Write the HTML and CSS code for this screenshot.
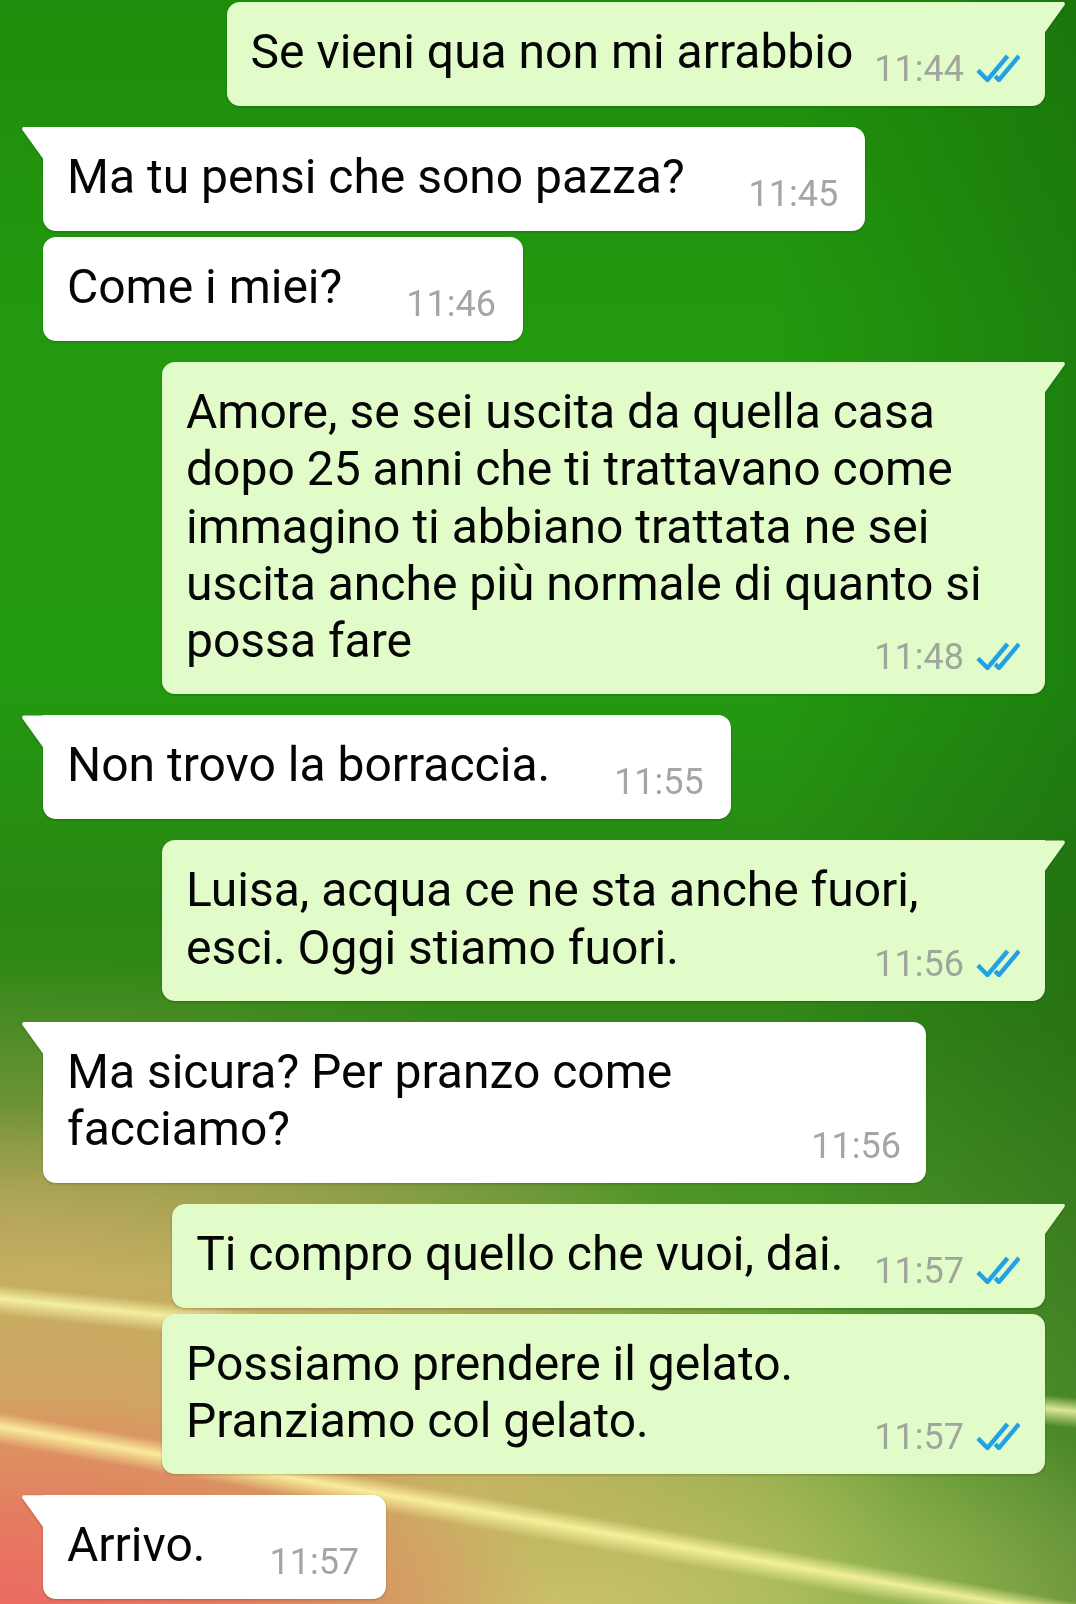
FILE: index.html
```html
<!DOCTYPE html>
<html lang="it">
<head>
<meta charset="utf-8">
<title>Chat</title>
<link rel="stylesheet" href="styles.css">
</head>
<body>
<main class="chat">

  <div class="row out">
    <div class="bubble tail">
      <p class="text">Se vieni qua non mi arrabbio</p>
      <span class="meta"><span class="time">11:44</span><svg class="ticks" viewBox="0 0 46 30"><polyline points="2,18 12,28 33,3"/><polyline points="20,24 24,28 45,3"/></svg></span>
    </div>
  </div>

  <div class="row in">
    <div class="bubble tail">
      <p class="text">Ma tu pensi che sono pazza?</p>
      <span class="meta"><span class="time">11:45</span></span>
    </div>
  </div>

  <div class="row in cont">
    <div class="bubble">
      <p class="text">Come i miei?</p>
      <span class="meta"><span class="time">11:46</span></span>
    </div>
  </div>

  <div class="row out">
    <div class="bubble tail multi">
      <p class="text">Amore, se sei uscita da quella casa<br>dopo 25 anni che ti trattavano come<br>immagino ti abbiano trattata ne sei<br>uscita anche più normale di quanto si<br>possa fare</p>
      <span class="meta"><span class="time">11:48</span><svg class="ticks" viewBox="0 0 46 30"><polyline points="2,18 12,28 33,3"/><polyline points="20,24 24,28 45,3"/></svg></span>
    </div>
  </div>

  <div class="row in">
    <div class="bubble tail">
      <p class="text">Non trovo la borraccia.</p>
      <span class="meta"><span class="time">11:55</span></span>
    </div>
  </div>

  <div class="row out">
    <div class="bubble tail multi">
      <p class="text">Luisa, acqua ce ne sta anche fuori,<br>esci. Oggi stiamo fuori.</p>
      <span class="meta"><span class="time">11:56</span><svg class="ticks" viewBox="0 0 46 30"><polyline points="2,18 12,28 33,3"/><polyline points="20,24 24,28 45,3"/></svg></span>
    </div>
  </div>

  <div class="row in">
    <div class="bubble tail multi">
      <p class="text">Ma sicura? Per pranzo come<br>facciamo?</p>
      <span class="meta"><span class="time">11:56</span></span>
    </div>
  </div>

  <div class="row out">
    <div class="bubble tail">
      <p class="text text-spaced">Ti compro quello che vuoi, dai.</p>
      <span class="meta"><span class="time">11:57</span><svg class="ticks" viewBox="0 0 46 30"><polyline points="2,18 12,28 33,3"/><polyline points="20,24 24,28 45,3"/></svg></span>
    </div>
  </div>

  <div class="row out cont">
    <div class="bubble multi">
      <p class="text">Possiamo prendere il gelato.<br>Pranziamo col gelato.</p>
      <span class="meta"><span class="time">11:57</span><svg class="ticks" viewBox="0 0 46 30"><polyline points="2,18 12,28 33,3"/><polyline points="20,24 24,28 45,3"/></svg></span>
    </div>
  </div>

  <div class="row in">
    <div class="bubble tail">
      <p class="text">Arrivo.</p>
      <span class="meta"><span class="time">11:57</span></span>
    </div>
  </div>

</main>
</body>
</html>
```

FILE: styles.css
```css
html, body {
  margin: 0;
  padding: 0;
}

body {
  width: 1076px;
  height: 1604px;
  overflow: hidden;
  font-family: Roboto, "Noto Sans", "Liberation Sans", sans-serif;
}

.chat {
  box-sizing: border-box;
  width: 1076px;
  height: 1604px;
  padding-top: 2px;
  display: flex;
  flex-direction: column;
  background-color: #24900f;
  background-image:
    linear-gradient(186deg, transparent 81.4%, rgba(255, 255, 175, 0.8) 82.2%, transparent 83.2%),
    linear-gradient(190deg, transparent 89.3%, rgba(255, 250, 165, 0.85) 90.1%, transparent 91.1%),
    radial-gradient(ellipse 540px 210px at 0% 100%, #ec6a62 0%, rgba(230, 122, 96, 0.92) 45%, rgba(220, 150, 100, 0) 100%),
    radial-gradient(ellipse 860px 340px at 6% 90%, rgba(220, 160, 100, 0.97) 0%, rgba(210, 180, 104, 0.8) 50%, rgba(200, 190, 100, 0) 100%),
    radial-gradient(ellipse 700px 240px at 52% 100%, rgba(214, 205, 118, 0.85) 0%, rgba(190, 200, 110, 0) 100%),
    radial-gradient(ellipse 760px 280px at 0% 77%, rgba(160, 152, 80, 0.95) 0%, rgba(140, 150, 70, 0.5) 55%, rgba(120, 150, 60, 0) 100%),
    linear-gradient(to right, rgba(0, 0, 0, 0) 72%, rgba(10, 50, 10, 0.24) 100%),
    linear-gradient(to bottom, #1f8d0b 0%, #23990f 20%, #229a10 42%, #2a8814 56%, #338818 64%, #479424 74%, #5aa02f 86%, #6aa838 100%);
}

.row {
  display: flex;
  margin-top: 21px;
}

.row:first-child {
  margin-top: 0;
}

.row.cont {
  margin-top: 6px;
}

.row.in {
  justify-content: flex-start;
  padding-left: 43px;
}

.row.out {
  justify-content: flex-end;
  padding-right: 31px;
}

.bubble {
  position: relative;
  box-sizing: border-box;
  max-width: 883px;
  display: flex;
  align-items: flex-start;
  padding: 21px 25px 19px 24px;
  border-radius: 13px;
  filter: drop-shadow(0 1.5px 0.8px rgba(0, 0, 0, 0.22));
}

.in .bubble {
  background: #ffffff;
  padding-right: 27px;
}

.out .bubble {
  background: #e1fcc8;
}

.text {
  margin: 0;
  font-size: 48px;
  line-height: 57.3px;
  color: #050505;
  white-space: nowrap;
}

.in .text {
  margin-right: 64px;
}

.out .text {
  margin-right: 21px;
}

.out .text.text-spaced {
  margin-right: 31px;
}

.meta {
  display: flex;
  align-items: flex-end;
  margin-top: 29px;
  height: 35px;
  flex: none;
}

.time {
  font-size: 36px;
  line-height: 35px;
  color: #a0a59d;
}

.in .time {
  color: #a5a5a5;
}

.ticks {
  width: 44px;
  height: 29px;
  margin-left: 12px;
  margin-bottom: 5px;
  fill: none;
  stroke: #22a2e4;
  stroke-width: 4.6;
  stroke-linecap: butt;
  stroke-linejoin: miter;
}

.bubble.multi {
  width: 883px;
  flex-direction: column;
}

.in .bubble.multi {
  padding-right: 25px;
}

.bubble.multi .text {
  margin-right: 0;
}

.bubble.multi .meta {
  align-self: flex-end;
  margin-top: -29px;
}

/* tails */
.bubble.tail::before {
  content: "";
  position: absolute;
  top: 0;
  width: 23px;
  height: 33px;
}

.out .bubble.tail {
  border-top-right-radius: 0;
}

.out .bubble.tail::before {
  right: -21px;
  background: #e1fcc8;
  clip-path: polygon(0 0, 88% 0, 92% 1%, 95% 4%, 94% 9%, 0 100%);
}

.in .bubble.tail {
  border-top-left-radius: 0;
}

.in .bubble.tail::before {
  left: -22px;
  background: #ffffff;
  clip-path: polygon(12% 0, 100% 0, 100% 100%, 6% 9%, 5% 4%, 8% 1%);
}
```
